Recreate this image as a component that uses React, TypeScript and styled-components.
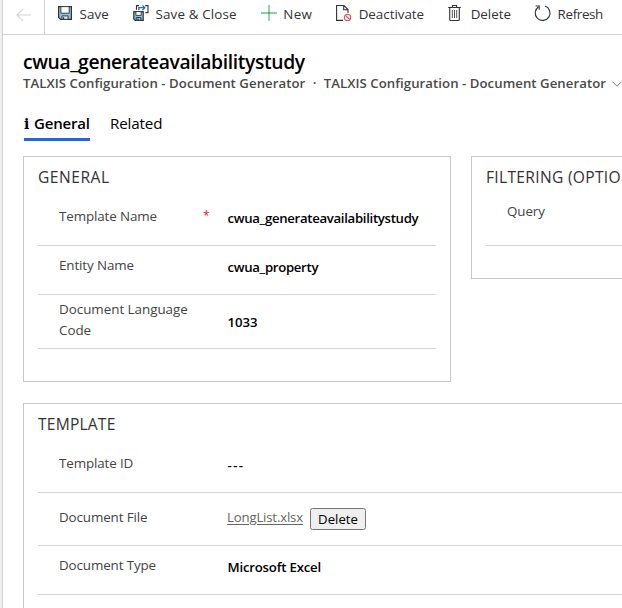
import React from 'react';
import styled, { createGlobalStyle } from 'styled-components';

const GlobalStyle = createGlobalStyle`
  * { box-sizing: border-box; }
  html, body { margin: 0; padding: 0; background: #fff; overflow: hidden; }
  body { font-family: "Open Sans", "Noto Sans", sans-serif; font-size: 13.4px; color: #333; }
`;

const Page = styled.div`
  display: flex;
  width: 622px;
  height: 608px;
  overflow: hidden;
`;

const NavEdge = styled.div`
  flex: 0 0 3px;
  background: #efefef;
  border-right: 1px solid #cfcfcf;
`;

const Main = styled.main`
  flex: 1;
  min-width: 0;
  overflow: hidden;
`;

const Toolbar = styled.header`
  display: flex;
  height: 35px;
  border-bottom: 1px solid #d2d2d2;
`;

const BackButton = styled.div`
  flex: 0 0 42px;
  padding: 7px 0 0 13px;
  border-right: 1px solid #d2d2d2;
`;

const Commands = styled.div`
  display: flex;
  gap: 24px;
  padding: 4px 0 0 12px;
`;

const Command = styled.div<{ $track?: number }>`
  display: flex;
  flex: none;
  gap: 6.5px;
  height: 20px;
  line-height: 20px;
  white-space: nowrap;
  letter-spacing: ${(p) => p.$track ?? 0}px;
`;

const Icon = styled.svg`
  display: block;
  flex: none;
  margin-top: 1px;
  fill: none;
  overflow: visible;
`;

const Heading = styled.div`
  padding: 13px 0 0 20px;
`;

const Title = styled.h1`
  margin: 0;
  height: 25px;
  font-size: 19.3px;
  line-height: 28px;
  font-weight: 600;
  letter-spacing: -0.36px;
  color: #000;
`;

const Subtitle = styled.div`
  display: flex;
  height: 20px;
  font-size: 13.2px;
  line-height: 20px;
  font-weight: 600;
  letter-spacing: 0.05px;
  color: #4a4a4a;
  white-space: nowrap;
`;

const Dot = styled.span`
  width: 19px;
  text-align: center;
`;

const Chevron = styled.svg`
  flex: none;
  margin: 8px 0 0 6px;
`;

const Tabs = styled.nav`
  display: flex;
  gap: 20px;
  margin: 20px 0 0 1px;
  height: 28px;
`;

const Tab = styled.div<{ $active?: boolean }>`
  display: flex;
  height: 28px;
  font-size: ${(p) => (p.$active ? 15 : 15.2)}px;
  line-height: 20px;
  font-weight: ${(p) => (p.$active ? 600 : 400)};
  letter-spacing: ${(p) => (p.$active ? -0.2 : -0.15)}px;
  color: #000;
  width: ${(p) => (p.$active ? '66px' : 'auto')};
  background: linear-gradient(${(p) => (p.$active ? '#2266e3, #2266e3' : 'transparent, transparent')}) 0 25px / 100% 3px
    no-repeat;
`;

const InfoGlyph = styled.span`
  width: 10px;
  padding-top: 1px;
  font: bold 14px/20px "DejaVu Serif", serif;
`;

const Sections = styled.div`
  display: grid;
  grid-template-columns: 428px 428px;
  gap: 21px 20px;
  align-items: start;
  margin: 15px 0 0 20px;
`;

const Card = styled.section<{ $height: number; $wide?: boolean }>`
  height: ${(p) => p.$height}px;
  grid-column: ${(p) => (p.$wide ? '1 / -1' : 'auto')};
  padding: 10px 14px 0;
  border: 1px solid #c8c8c8;
`;

const CardTitle = styled.h2<{ $track?: number }>`
  margin: 0 0 9px;
  font-size: 15.6px;
  line-height: 20px;
  font-weight: 400;
  letter-spacing: ${(p) => p.$track ?? 0}px;
  white-space: nowrap;
  color: #333;
`;

const Row = styled.div<{ $height: number }>`
  display: grid;
  grid-template-columns: 143px 25px 1fr;
  height: ${(p) => p.$height}px;
  padding-left: 21px;
  border-bottom: 1px solid #d4d4d4;
`;

const Label = styled.div<{ $top: number; $track?: number }>`
  padding-top: ${(p) => p.$top}px;
  line-height: 20.5px;
  letter-spacing: ${(p) => p.$track ?? -0.12}px;
  color: #444;
`;

const Required = styled.span`
  padding: 10px 0 0 1px;
  font-size: 12px;
  line-height: 20px;
  color: #f01020;
`;

const Value = styled.div<{ $top: number; $track?: number }>`
  padding-top: ${(p) => p.$top}px;
  padding-left: 0.5px;
  font-size: 13.2px;
  line-height: 20px;
  font-weight: 600;
  letter-spacing: ${(p) => p.$track ?? -0.31}px;
  white-space: nowrap;
  color: #000;
`;

const FileValue = styled.div`
  display: flex;
  align-items: flex-start;
  padding-top: 14px;
`;

const FileLink = styled.a`
  width: 77px;
  line-height: 20px;
  font-size: 13.2px;
  letter-spacing: -0.17px;
  color: #666;
  text-decoration: underline;
  text-underline-offset: 2px;
  white-space: nowrap;
`;

const DeleteButton = styled.button`
  width: 56px;
  height: 22px;
  margin: 1px 0 0 6px;
  padding: 0;
  border: 1px solid #767676;
  border-radius: 2.5px;
  background: #efefef;
  color: #000;
  font: 400 13.2px/20px "Open Sans", sans-serif;
`;

const BackIcon = () => (
  <svg width="16" height="16" viewBox="0 0 16 16" fill="none" stroke="#d6d6d6" strokeWidth="1.1">
    <path d="M15 8H1.2M7.2 1.8 1 8l6.2 6.2" />
  </svg>
);

const SaveIcon = () => (
  <Icon width="16" height="16" viewBox="0 0 16 16">
    <path d="M1.6 1.6H14.4V14.4H3.6L1.6 12.4Z" fill="#86c0ea" stroke="#333" strokeWidth="1.2" />
    <path d="M3.9 1.6H12.2V8.2H3.9Z" fill="#fff" stroke="#333" strokeWidth=".9" />
    <path d="M4.9 14.3V10.9H11.1V14.3Z" fill="#e4e4e4" stroke="#333" strokeWidth=".9" />
    <path d="M6.5 12.2v2.2" stroke="#333" strokeWidth="1.2" />
  </Icon>
);

const SaveCloseIcon = () => (
  <Icon width="16" height="16" viewBox="0 0 16 16">
    <path d="M.8 6.6H10.2V15.4H2.2L.8 14Z" fill="#86c0ea" stroke="#333" strokeWidth="1.2" />
    <path d="M2.9 6.6H8.2V10.4H2.9Z" fill="#fff" stroke="#333" strokeWidth=".9" />
    <path d="M3.2 15.3V12.5H7.9V15.3Z" fill="#bbb" stroke="#333" strokeWidth=".9" />
    <path d="M5 13.3v2" stroke="#333" />
    <path d="M3.5 4.8V.6H6M12.2.6H15V7.6H12.4" stroke="#333" strokeWidth="1.1" />
    <path d="M5.8 5.2V2.7H11.4M9.5.4 11.8 2.7 9.5 5" stroke="#1a72b8" strokeWidth="1.3" />
  </Icon>
);

const NewIcon = () => (
  <Icon width="16" height="16" viewBox="0 0 16 16">
    <path d="M8 0V16M0 8H16" stroke="#8bcfa4" strokeWidth="1.8" />
    <path d="M7 8H9" stroke="#53aa79" strokeWidth="1.8" />
  </Icon>
);

const DeactivateIcon = () => (
  <Icon width="16" height="16" viewBox="0 0 16 16">
    <path d="M7 15.4H.6V.5H8L12 4.5V8M7.7.6V4.8H12" stroke="#333" strokeWidth="1.1" />
    <circle cx="11.6" cy="12.4" r="3.1" fill="#fff" stroke="#e84b50" strokeWidth="1.1" />
    <path d="M9.5 10.3 13.7 14.5" stroke="#e84b50" strokeWidth="1.1" />
  </Icon>
);

const DeleteIcon = () => (
  <Icon width="16" height="16" viewBox="0 0 16 16">
    <path d="M.2 2.5H12.8M4.4 2.4V.5H8.6V2.4M1.7 2.6V14.5Q1.7 15.5 2.7 15.5H10.3Q11.3 15.5 11.3 14.5V2.6" stroke="#333" strokeWidth="1.1" />
    <path d="M4.3 5V13M6.5 5V13M8.7 5V13" stroke="#444" strokeWidth=".9" />
  </Icon>
);

const RefreshIcon = () => (
  <Icon width="16" height="16" viewBox="0 0 16 16">
    <path d="M10 1A7.4 7.4 0 1 1 3.6 1.8" stroke="#333" strokeWidth="1.1" />
    <path d="M.6 1H4.2V4.7" stroke="#333" strokeWidth="1.1" />
  </Icon>
);

export default function App() {
  return (
    <>
      <GlobalStyle />
      <Page>
        <NavEdge />
        <Main>
          <Toolbar>
            <BackButton>
              <BackIcon />
            </BackButton>
            <Commands>
              <Command $track={0.12}>
                <SaveIcon />
                <span>Save</span>
              </Command>
              <Command $track={0.15}>
                <SaveCloseIcon />
                <span>Save &amp; Close</span>
              </Command>
              <Command $track={0.3}>
                <NewIcon />
                <span>New</span>
              </Command>
              <Command $track={-0.02}>
                <DeactivateIcon />
                <span>Deactivate</span>
              </Command>
              <Command>
                <DeleteIcon />
                <span>Delete</span>
              </Command>
              <Command $track={-0.35}>
                <RefreshIcon />
                <span>Refresh</span>
              </Command>
            </Commands>
          </Toolbar>

          <Heading>
            <Title>cwua_generateavailabilitystudy</Title>
            <Subtitle>
              <span>TALXIS Configuration - Document Generator</span>
              <Dot>·</Dot>
              <span>TALXIS Configuration - Document Generator</span>
              <Chevron width="10" height="6" viewBox="0 0 10 6" fill="none" stroke="#777">
                <path d="M.5.7 5 5.2 9.5.7" />
              </Chevron>
            </Subtitle>
            <Tabs>
              <Tab $active>
                <InfoGlyph>i</InfoGlyph>
                <span>General</span>
              </Tab>
              <Tab>Related</Tab>
            </Tabs>
          </Heading>

          <Sections>
            <Card $height={226}>
              <CardTitle $track={0.5}>GENERAL</CardTitle>
              <Row $height={50}>
                <Label $top={10}>Template Name</Label>
                <Required>*</Required>
                <Value $top={12}>cwua_generateavailabilitystudy</Value>
              </Row>
              <Row $height={49}>
                <Label $top={9}>Entity Name</Label>
                <span />
                <Value $top={11}>cwua_property</Value>
              </Row>
              <Row $height={54}>
                <Label $top={4} $track={-0.02}>
                  Document Language
                  <br />
                  Code
                </Label>
                <span />
                <Value $top={17} $track={0}>1033</Value>
              </Row>
            </Card>

            <Card $height={123}>
              <CardTitle $track={0.3}>FILTERING (OPTIO</CardTitle>
              <Row $height={50}>
                <Label $top={5}>Query</Label>
              </Row>
            </Card>

            <Card $height={300} $wide>
              <CardTitle $track={0.2}>TEMPLATE</CardTitle>
              <Row $height={50}>
                <Label $top={10}>Template ID</Label>
                <span />
                <Value $top={12} $track={1.4}>---</Value>
              </Row>
              <Row $height={53}>
                <Label $top={14}>Document File</Label>
                <span />
                <FileValue>
                  <FileLink>LongList.xlsx</FileLink>
                  <DeleteButton type="button">Delete</DeleteButton>
                </FileValue>
              </Row>
              <Row $height={49}>
                <Label $top={9}>Document Type</Label>
                <span />
                <Value $top={11} $track={-0.2}>Microsoft Excel</Value>
              </Row>
            </Card>
          </Sections>
        </Main>
      </Page>
    </>
  );
}
